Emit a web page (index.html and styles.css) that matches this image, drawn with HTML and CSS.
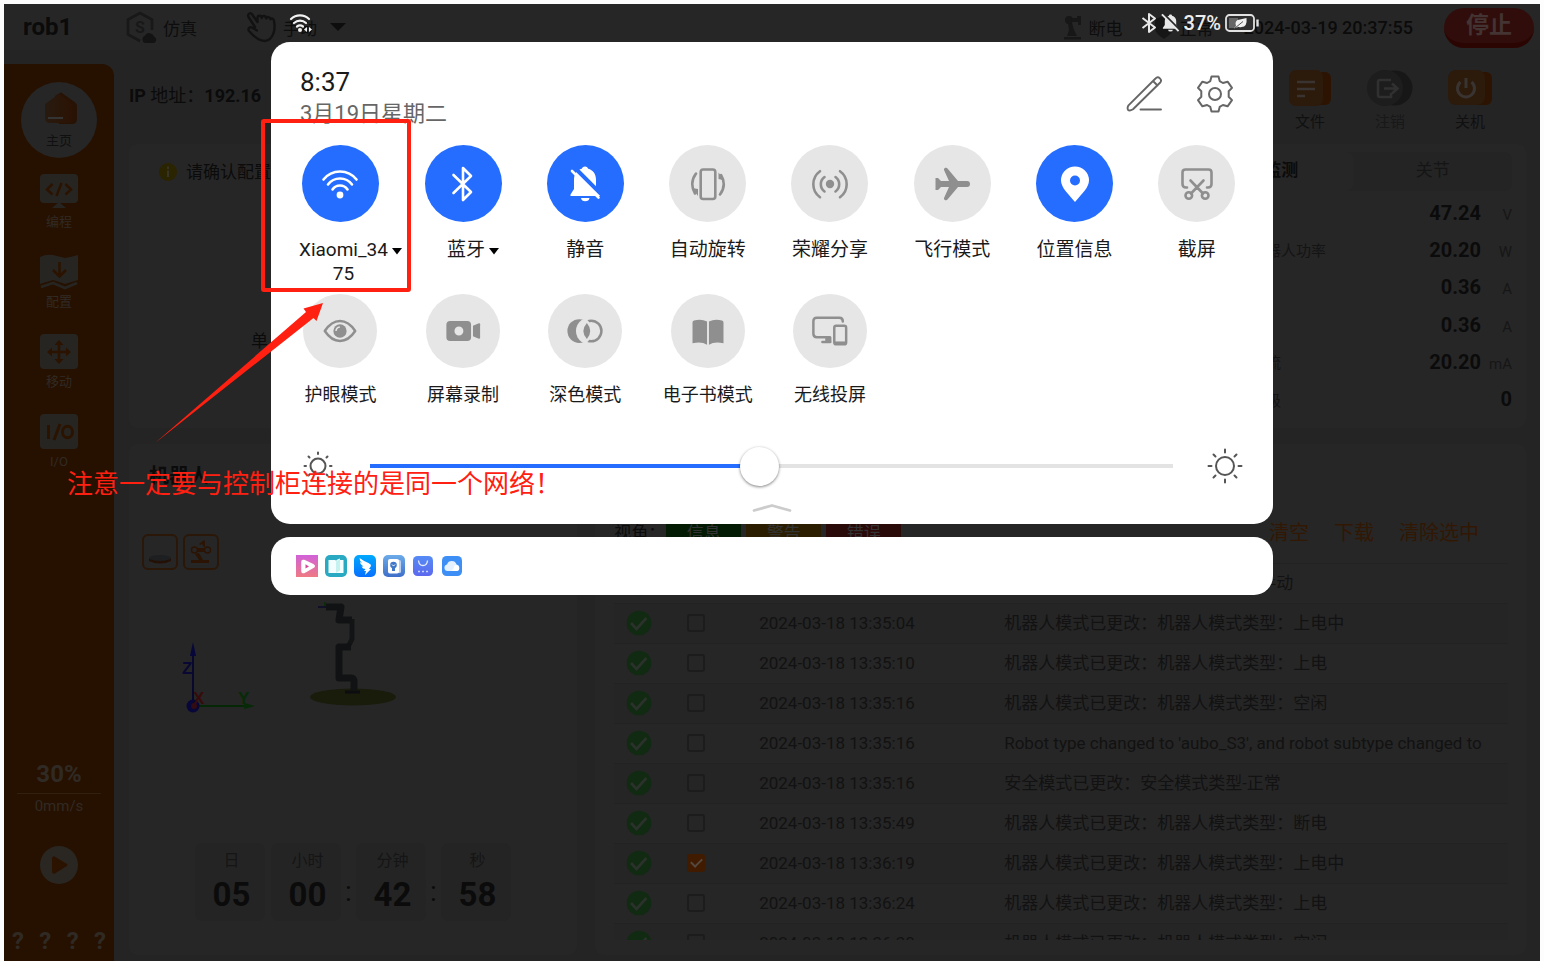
FILE: index.html
```html
<!DOCTYPE html>
<html lang="zh-CN">
<head>
<meta charset="utf-8">
<title>rob1</title>
<link rel="stylesheet" href="styles.css">
</head>
<body>
<svg class="defs" aria-hidden="true">
  <symbol id="ok" viewBox="0 0 26 26"><circle cx="13" cy="13" r="12.3" fill="#112a12"/><path d="M5 13l5.500 6L20.500 8" fill="none" stroke="#2b312b" stroke-width="2.800"/></symbol>
</svg>
<div class="screen">
  <header class="topbar">
    <strong class="robot-name">rob1</strong>
    <span class="mode sim">
      <svg width="32" height="34" viewBox="0 0 32 34"><path d="M15 31L3 24.500V9.500L15 3l12 6.500V20" fill="none" stroke="#181818" stroke-width="2.600"/><text x="15" y="23" class="hex-letter" text-anchor="middle">S</text><path d="M20 33a4 4 0 0 1 0-7.500 5 5 0 0 1 9 1 3.500 3.500 0 0 1 0 6.500z" fill="#131313"/></svg>
      仿真
    </span>
    <button class="mode hand" type="button">
      <svg width="32" height="34" viewBox="0 0 32 34"><path d="M10 17L3.500 7C2 4 5.500 2 7.200 4.500L12.500 12V8c0-3 4-3 4.200 0 .5-3 4.300-2.500 4.500.5 1-2.500 4-1.500 4.300.8 1-1.500 3-.8 3.400 1.200C31 20 28 30 20 31c-5 0-9-2-16-10-1.500-2.500 1-4.500 3-3.500l5 3" fill="none" stroke="#121212" stroke-width="2.400" stroke-linejoin="round" stroke-linecap="round"/></svg>
      手动
      <svg class="caret" width="16" height="10" viewBox="0 0 16 10"><path d="M0 1h16L8 9z" fill="#0d0d0d"/></svg>
    </button>
    <span class="mode power">
      <svg width="20" height="26" viewBox="0 0 20 26"><g fill="#171717"><path d="M1 23h17v2.500H1zM4 22l2-6-1-7h4l2 7 3 6z"/><circle cx="6" cy="6" r="4"/><path d="M8 4h6V2h4v9h-3V8H9z"/></g></svg>
      断电
    </span>
    <span class="mode safety">
      <svg width="20" height="26" viewBox="0 0 20 26"><path d="M10 2l9 3v9c0 5-5 8-9 11-4-3-9-6-9-11V5z" fill="#161616"/></svg>
      正常
    </span>
    <time class="clock">2024-03-19 20:37:55</time>
    <button class="stop" type="button">停止</button>
  </header>

  <nav class="sidebar">
    <a class="nav-item active" href="#">
      <svg width="40" height="36" viewBox="0 0 40 36"><defs><linearGradient id="hg" x1="0" x2="1"><stop offset="0" stop-color="#281a10"/><stop offset="1" stop-color="#2b1303"/></linearGradient></defs><path d="M16 5l6-3.500 13 9c2 1.500 3 3 3 5V28q0 5-5 5H20z" fill="#281204"/><path d="M6 13L20 3l13 10v19H11q-5 0-5-5z" fill="url(#hg)"/><path d="M9 27h15" stroke="#343434" stroke-width="2"/></svg>
      主页
    </a>
    <a class="nav-item" href="#">
      <svg width="38" height="36" viewBox="0 0 38 36"><rect width="38" height="29" rx="4" fill="#272522"/><path d="M19 28l7 6H12z" fill="#272522"/><path d="M12.500 10l-5.500 5.500 5.500 5M25.500 10l5.500 5.500-5.500 5M21.500 9l-5 13" fill="none" stroke="#2b1300" stroke-width="2.500"/></svg>
      编程
    </a>
    <a class="nav-item" href="#">
      <svg width="38" height="36" viewBox="0 0 38 36"><path d="M0 3q6-3 13-2l12 3q6-1 13-3v25l-13 4-12-4-13 4z" fill="#272522"/><path d="M1 33l12-4 12 5 12-5" fill="none" stroke="#272522" stroke-width="2.600"/><path d="M19.500 8v14M13 16l6.500 6.500L26 16" fill="none" stroke="#2b1300" stroke-width="2.600"/></svg>
      配置
    </a>
    <a class="nav-item" href="#">
      <svg width="38" height="36" viewBox="0 0 38 36"><rect width="38" height="35" rx="4" fill="#272522"/><path d="M19 9v18M10 18h18" stroke="#2b1300" stroke-width="2.500"/><path d="M19 6l4.500 5h-9zM19 30l4.500-5h-9zM7 18l5-4.500v9zM31 18l-5-4.500v9z" fill="#2b1300"/></svg>
      移动
    </a>
    <a class="nav-item" href="#">
      <svg width="38" height="36" viewBox="0 0 38 36"><rect width="38" height="35" rx="4" fill="#272522"/><path d="M8.500 11v14M20 10l-6 16" stroke="#2b1300" stroke-width="3"/><ellipse cx="27.500" cy="18" rx="5" ry="5.800" fill="none" stroke="#2b1300" stroke-width="3"/></svg>
      I/O
    </a>
    <div class="speed">
      <strong>30%</strong>
      <span>0mm/s</span>
    </div>
    <button class="play" type="button" aria-label="播放"><svg width="38" height="38" viewBox="0 0 38 38"><circle cx="19" cy="19" r="19" fill="#2a2723"/><path d="M14.500 11.500L26 18.500q1 .5 0 1L14.500 26.500q-1.500.5-1.500-1V12.500q0-1.500 1.500-1z" fill="#2b1300" stroke="#2b1300" stroke-width="2"/></svg></button>
    <div class="unknown"><span>?</span><span>?</span><span>?</span><span>?</span></div>
  </nav>

  <main class="content">
    <div class="toolbar">
      <p class="ip"><b>IP</b> 地址：<b>192.16</b></p>
      <div class="tools">
        <button class="tool" type="button"><svg width="44" height="38" viewBox="0 0 44 38"><rect x="14" y="3" width="29" height="33" rx="6" fill="#2d1402"/><rect x="1" y="1" width="34" height="36" rx="7" fill="#2c1a0b"/><path d="M9 13h18M9 20h18M9 27h8" stroke="#393431" stroke-width="2.400"/></svg>文件</button>
        <button class="tool off" type="button"><svg width="48" height="38" viewBox="0 0 48 38"><circle cx="29" cy="19" r="17.500" fill="#171717"/><circle cx="19" cy="19" r="18" fill="#1d1d1d"/><path d="M25 11h-11q-2 0-2 2v13q0 2 2 2h11v-4M18 19.500h13M26 14.500l5.500 5-5.500 5" fill="none" stroke="#303030" stroke-width="2.600"/></svg>注销</button>
        <button class="tool" type="button"><svg width="46" height="38" viewBox="0 0 46 38"><rect x="18" y="3" width="27" height="33" rx="6" fill="#2d1402"/><rect x="1" y="1" width="37" height="35" rx="8" fill="#2c1a0b"/><path d="M13.500 13a8.500 8.500 0 1 0 11 0M19 9v10" fill="none" stroke="#393431" stroke-width="3"/></svg>关机</button>
      </div>
    </div>

    <div class="top-row">
      <section class="card notice">
        <p class="hint"><svg width="18" height="18" viewBox="0 0 18 18"><circle cx="9" cy="9" r="9" fill="#2b2400"/><path d="M9 7.500V14M9 3.500V6" stroke="#35332a" stroke-width="2"/></svg>请确认配置</p>
        <p class="unit-note">单</p>
      </section>
      <section class="card monitor">
        <div class="tabs">
          <button class="tab on" type="button">监测</button>
          <button class="tab" type="button">关节</button>
        </div>
        <dl class="readings">
          <div><dt></dt><dd><b>47.24</b><i>V</i></dd></div>
          <div><dt>机器人功率</dt><dd><b>20.20</b><i>W</i></dd></div>
          <div><dt></dt><dd><b>0.36</b><i>A</i></dd></div>
          <div><dt></dt><dd><b>0.36</b><i>A</i></dd></div>
          <div><dt>电流</dt><dd><b>20.20</b><i>mA</i></dd></div>
          <div><dt>等级</dt><dd><b>0</b></dd></div>
        </dl>
      </section>
    </div>

    <div class="bottom-row">
      <section class="card robot">
        <h2>机器人</h2>
        <div class="views">
          <button type="button" aria-label="底座"><svg width="32" height="32" viewBox="0 0 32 32"><path d="M5 22v3q11 5 22 0v-3z" fill="#241005"/><ellipse cx="16" cy="22" rx="11" ry="3" fill="#1d1f20"/></svg></button>
          <button type="button" aria-label="机械臂"><svg width="32" height="32" viewBox="0 0 32 32"><g fill="none" stroke="#2c1404" stroke-width="1.500"><circle cx="9.500" cy="14" r="3"/><circle cx="22.500" cy="14" r="3"/></g><path d="M13 12h6v4h-6zM10 18l4-1 4 7h-4zM6 24h18v3H6zM14 8l5-4 1 1v6h-1l-2-3-2 1z" fill="#2c1404"/></svg></button>
        </div>
        <svg class="scene" viewBox="0 0 280 120" width="280" height="120">
          <path d="M51 48V100" stroke="#08082e" stroke-width="2"/><path d="M51 40l3 14h-6z" fill="#07073a"/>
          <path d="M56 104h54" stroke="#062706" stroke-width="2"/><path d="M102 101l11 3-11 3z" fill="#062b06"/>
          <circle cx="51" cy="104" r="6.500" fill="#07073a"/><circle cx="52" cy="104" r="3" fill="#330b12"/>
          <text x="40" y="72" fill="#080832">Z</text><text x="51" y="102" fill="#370b0b">X</text><text x="96" y="102" fill="#062b06">Y</text>
          <ellipse cx="211" cy="95" rx="43" ry="8.500" fill="#191b0b"/>
          <path d="M184 5h15l-2 13h13" fill="none" stroke="#111213" stroke-width="7" stroke-linejoin="round"/>
          <path d="M210 17v20l-4 8" fill="none" stroke="#131415" stroke-width="5"/>
          <path d="M209 45h-12v31h12q3 0 3 4v8" fill="none" stroke="#111213" stroke-width="7" stroke-linejoin="round"/>
          <path d="M176 5h8" stroke="#101028" stroke-width="2"/><path d="M183 0v4" stroke="#0b2b0b" stroke-width="2"/>
          <path d="M203 90h15" stroke="#0c0d10" stroke-width="3"/>
        </svg>
        <div class="countdown">
          <div class="cell"><span>日</span><b>05</b></div>
          <em></em>
          <div class="cell"><span>小时</span><b>00</b></div>
          <em class="colon">:</em>
          <div class="cell"><span>分钟</span><b>42</b></div>
          <em class="colon">:</em>
          <div class="cell"><span>秒</span><b>58</b></div>
        </div>
      </section>

      <section class="card log">
        <div class="filters">
          <span class="filters-label">视角：</span>
          <button class="chip info" type="button">信息</button>
          <button class="chip warn" type="button">警告</button>
          <button class="chip error" type="button">错误</button>
          <div class="actions"><a href="#">清空</a><a href="#">下载</a><a href="#">清除选中</a></div>
        </div>
        <div class="log-scroll">
          <table>
            <colgroup><col class="c-state"><col class="c-pick"><col class="c-time"><col></colgroup>
            <tbody>
              <tr><td><svg><use href="#ok"/></svg></td><td><input type="checkbox" aria-label="选择"></td><td></td><td>机器人模式已更改：机器人模式：手动</td></tr>
              <tr><td><svg><use href="#ok"/></svg></td><td><input type="checkbox" aria-label="选择"></td><td>2024-03-18 13:35:04</td><td>机器人模式已更改：机器人模式类型：上电中</td></tr>
              <tr><td><svg><use href="#ok"/></svg></td><td><input type="checkbox" aria-label="选择"></td><td>2024-03-18 13:35:10</td><td>机器人模式已更改：机器人模式类型：上电</td></tr>
              <tr><td><svg><use href="#ok"/></svg></td><td><input type="checkbox" aria-label="选择"></td><td>2024-03-18 13:35:16</td><td>机器人模式已更改：机器人模式类型：空闲</td></tr>
              <tr><td><svg><use href="#ok"/></svg></td><td><input type="checkbox" aria-label="选择"></td><td>2024-03-18 13:35:16</td><td>Robot type changed to 'aubo_S3', and robot subtype changed to</td></tr>
              <tr><td><svg><use href="#ok"/></svg></td><td><input type="checkbox" aria-label="选择"></td><td>2024-03-18 13:35:16</td><td>安全模式已更改：安全模式类型-正常</td></tr>
              <tr><td><svg><use href="#ok"/></svg></td><td><input type="checkbox" aria-label="选择"></td><td>2024-03-18 13:35:49</td><td>机器人模式已更改：机器人模式类型：断电</td></tr>
              <tr><td><svg><use href="#ok"/></svg></td><td><input type="checkbox" aria-label="选择" checked></td><td>2024-03-18 13:36:19</td><td>机器人模式已更改：机器人模式类型：上电中</td></tr>
              <tr><td><svg><use href="#ok"/></svg></td><td><input type="checkbox" aria-label="选择"></td><td>2024-03-18 13:36:24</td><td>机器人模式已更改：机器人模式类型：上电</td></tr>
              <tr><td><svg><use href="#ok"/></svg></td><td><input type="checkbox" aria-label="选择"></td><td>2024-03-18 13:36:30</td><td>机器人模式已更改：机器人模式类型：空闲</td></tr>
            </tbody>
          </table>
        </div>
      </section>
    </div>
  </main>

  <div class="shade">
    <div class="status-bar">
      <svg width="26" height="22" viewBox="0 0 26 22"><g fill="none" stroke="#f2f2f2" stroke-width="2.200" stroke-linecap="round"><path d="M2 7a13 13 0 0 1 18 0M5 11a9 9 0 0 1 12 0M8 14.500a5 5 0 0 1 6 0"/></g><circle cx="11" cy="18" r="2" fill="#f2f2f2"/><path d="M18 15v5l-3-2.500zM20 15v5l3-2.500z" fill="#f2f2f2"/></svg>
      <div class="status-right">
        <svg width="16" height="22" viewBox="0 0 16 22"><path d="M1.500 6L14 15.500 8 20V2l6 4.500L1.500 16" fill="none" stroke="#e8e8e8" stroke-width="2" stroke-linejoin="round"/></svg>
        <svg width="19" height="20" viewBox="0 0 40 40"><path d="M20 2c2 0 3 1 3.300 2.500C29 6 32 10 32 15.500V24l4 6v2H4v-2l4-6v-8.500C8 10 11 6 16.700 4.500 17 3 18 2 20 2zM15 34h10a5 4 0 0 1-10 0z" fill="#e8e8e8"/><path d="M6 1l34 34" stroke="#262626" stroke-width="4"/><path d="M2 2l35 35" stroke="#e8e8e8" stroke-width="4"/></svg>
        <span>37%</span>
        <svg width="34" height="20" viewBox="0 0 34 20"><rect x="1" y="2" width="28" height="16" rx="3.500" fill="#303030" stroke="#e2e2e2" stroke-width="1.800"/><rect x="4" y="5" width="9" height="10" fill="#666"/><path d="M32.500 6.500v7" stroke="#e2e2e2" stroke-width="2.400"/><path d="M9 15.500L11 13Q9 7 15 6.500L21.500 5Q22.500 14 16.500 14q-2 .5-4-.3z" fill="#f0f0f0"/><path d="M10 15l8-6.500" stroke="#555" stroke-width="1"/></svg>
      </div>
    </div>

    <section class="panel">
      <div class="panel-head">
        <div>
          <div class="now">8:37</div>
          <div class="date">3月19日星期二</div>
        </div>
        <div class="panel-tools">
          <button type="button" aria-label="编辑"><svg width="38" height="38" viewBox="0 0 38 38"><g fill="none" stroke="#666" stroke-width="1.900" stroke-linecap="round" stroke-linejoin="round"><path d="M29.500 3.500a2.800 2.800 0 0 1 4.500 4.300L7 34.300q-3.500 2-5 .5-1-2 .5-4.500zM27 6l4.500 4.500M14.500 34.500H35"/></g></svg></button>
          <button type="button" aria-label="设置"><svg width="38" height="38" viewBox="0 0 38 38"><g fill="none" stroke="#666" stroke-width="2" stroke-linejoin="round"><path d="M15.500 1.500h7l1.200 4.600 3.200 1.900 4.700-1.300 4.400 6.200-3.300 3.300v5.600l3.300 3.300-4.400 6.200-4.700-1.300-3.200 1.900-1.200 4.600h-7l-1.200-4.600-3.200-1.900-4.700 1.300-4.400-6.200 3.300-3.300v-5.600l-3.300-3.300 4.400-6.200L11.100 8l3.200-1.900z"/><circle cx="19" cy="19" r="6"/></g></svg></button>
        </div>
      </div>

      <div class="tiles">
        <button class="tile on" type="button">
          <span class="disc"><svg viewBox="0 0 40 40"><g class="line"><path d="M3.500 15.500a21 21 0 0 1 33 0M8 20.500a15 15 0 0 1 24 0M12.500 25.500a9 9 0 0 1 15 0"/></g><circle cx="20" cy="31" r="3.400"/></svg></span>
          <span class="name with-caret"><span>Xiaomi_34<br>75</span><svg class="drop" viewBox="0 0 10 8"><path d="M0 1h10L5 7.500z"/></svg></span>
        </button>
        <button class="tile on" type="button">
          <span class="disc"><svg viewBox="0 0 40 40"><path class="line" d="M10.500 11L28 28l-8 8V4l8 8L10.500 29"/></svg></span>
          <span class="name with-caret"><span>蓝牙</span><svg class="drop" viewBox="0 0 10 8"><path d="M0 1h10L5 7.500z"/></svg></span>
        </button>
        <button class="tile on" type="button">
          <span class="disc"><svg viewBox="0 0 40 40"><path d="M20 2.500c1.700 0 2.900 1 3.200 2.300C28 6 31 10 31 15.500V24l4.500 6.500V32H5.500v-1.500L9 25V15.500C9 10 12 6 16.800 4.800 17.100 3.500 18.300 2.500 20 2.500zM16 34h8.500a4.300 3.800 0 0 1-8.500 0z"/><path d="M8 2l32 32v-8" fill="none" stroke="#256dff" stroke-width="4"/><path class="line" d="M7 7l26.500 26.500"/></svg></span>
          <span class="name">静音</span>
        </button>
        <button class="tile" type="button">
          <span class="disc"><svg viewBox="0 0 40 40"><rect class="line" x="12.700" y="5.500" width="14.600" height="29.500" rx="2.500"/><path class="line" d="M8 9.500Q1 19 7 29.500M32 30.500Q39 21 33 11"/><path d="M4 24l6 1v7zM30.500 8.500l6 8-6-1.500z"/></svg></span>
          <span class="name">自动旋转</span>
        </button>
        <button class="tile" type="button">
          <span class="disc"><svg viewBox="0 0 40 40"><circle cx="20" cy="20" r="4.200"/><path class="line" d="M10 7.200a16 16 0 0 0 0 26M14.500 13a9 9 0 0 0 0 14.500M30 7.200a16 16 0 0 1 0 26M25.500 13a9 9 0 0 1 0 14.500"/></svg></span>
          <span class="name">荣耀分享</span>
        </button>
        <button class="tile" type="button">
          <span class="disc"><svg viewBox="0 0 40 40"><path d="M35 17a3 3 0 0 1 0 6H26L15.500 35.500a2 2 0 0 1-3.600-1.200L17 23H9l-3 3H3.500V14H6l3 3h8L11.900 5.700a2 2 0 0 1 3.600-1.200L26 17z"/></svg></span>
          <span class="name">飞行模式</span>
        </button>
        <button class="tile on" type="button">
          <span class="disc"><svg viewBox="0 0 40 40"><path fill-rule="evenodd" d="M20 38C13 29.500 6 23.500 6 16.500a14 14 0 0 1 28 0C34 23.500 27 29.500 20 38zM20 11.500a5 5 0 1 0 0 10 5 5 0 0 0 0-10z"/></svg></span>
          <span class="name">位置信息</span>
        </button>
        <button class="tile" type="button">
          <span class="disc"><svg viewBox="0 0 40 40"><path class="line" d="M10 23.500H9q-3.500 0-3.500-3.500V8.500q0-3 3-3h23q3 0 3 3V20q0 3.500-3.500 3.500h-1M13.500 16.500L26 29.500M26.500 16.500L14 29.500"/><circle class="line" cx="11.800" cy="31.500" r="3.300"/><circle class="line" cx="28.200" cy="31.500" r="3.300"/></svg></span>
          <span class="name">截屏</span>
        </button>
        <button class="tile small" type="button">
          <span class="disc"><svg viewBox="0 0 40 40"><path class="line" d="M4 20Q11 9.500 20 9.500T36 20Q29 30.500 20 30.500T4 20z"/><circle cx="20" cy="20" r="7"/><path d="M15.800 20a4.500 4.500 0 0 1 4-4.200" fill="none" stroke="#e6e6e6" stroke-width="1.600"/></svg></span>
          <span class="name">护眼模式</span>
        </button>
        <button class="tile small" type="button">
          <span class="disc"><svg viewBox="0 0 40 40"><path fill-rule="evenodd" d="M6.500 9.500h18q4 0 4 4v13q0 4-4 4h-18q-4 0-4-4v-13q0-4 4-4zM15.700 15.300a4.700 4.700 0 1 0 0 9.400 4.700 4.700 0 0 0 0-9.400z"/><path d="M30.500 14.500L36 12q2-.6 2 1v14q0 1.600-2 1l-5.500-2.500z"/></svg></span>
          <span class="name">屏幕录制</span>
        </button>
        <button class="tile small" type="button">
          <span class="disc"><svg viewBox="0 0 40 40"><circle cx="14" cy="20" r="12.500"/><circle cx="26.500" cy="20" r="12.800" fill="#e6e6e6"/><circle class="line" cx="26.500" cy="20" r="10.800"/><path d="M20.500 6.500a17 17 0 0 1 0 27l-4-2a14 14 0 0 1 0-23z" fill="#e6e6e6"/><path d="M22 11.500q7 8.500 0 17-7.500-8.500 0-17z"/></svg></span>
          <span class="name">深色模式</span>
        </button>
        <button class="tile small" type="button">
          <span class="disc"><svg viewBox="0 0 40 40"><path d="M19 10v24.500q-6-4-15.300-1.500V11q0-1.500 1.500-2Q13 7 19 10zM21 10v24.500q6-4 15.300-1.500V11q0-1.500-1.500-2Q27 7 21 10z"/></svg></span>
          <span class="name">电子书模式</span>
        </button>
        <button class="tile small" type="button">
          <span class="disc"><svg viewBox="0 0 40 40"><path class="line" d="M20 26.500H6q-3.500 0-3.500-3.500V9.500Q2.500 6 6 6h24q3.500 0 3.500 4M12 31.500h8"/><path d="M15 26.500h6.500v6H15z"/><rect class="line" x="24.500" y="14.500" width="12.500" height="19.500" rx="2"/><path d="M25 31h12v3.500H25z"/></svg></span>
          <span class="name">无线投屏</span>
        </button>
      </div>

      <div class="brightness">
        <svg width="32" height="32" viewBox="0 0 32 32"><g class="sun"><circle cx="16" cy="16" r="7.500"/><path d="M16 2.500v1.500M16 28v1.500M2.500 16H4M28 16h1.500M6.500 6.500l1 1M24.500 24.500l1 1M6.500 25.500l1-1M24.500 7.500l1-1"/></g></svg>
        <input type="range" min="0" max="1000" value="484" aria-label="亮度">
        <svg width="36" height="36" viewBox="0 0 36 36"><g class="sun"><circle cx="18" cy="18" r="9"/><path d="M18 1.500v3M18 31.500v3M1.500 18h3M31.500 18h3M6.500 6.500l2 2M27.500 27.500l2 2M6.500 29.500l2-2M27.500 8.500l2-2"/></g></svg>
      </div>
      <svg class="grip" width="40" height="10" viewBox="0 0 40 10"><path d="M2 7.500L20 2.500 38 7.500" fill="none" stroke="#ccc" stroke-width="2.800" stroke-linecap="round" stroke-linejoin="round"/></svg>
    </section>

    <section class="notifications">
      <svg viewBox="0 0 22 22"><defs><linearGradient id="a1" x2="0" y2="1"><stop stop-color="#d161d9"/><stop offset="1" stop-color="#ee7a83"/></linearGradient></defs><path d="M0 0h22v22H0z" fill="url(#a1)"/><path d="M8 5.500L17.500 10q1.500 1 0 2.200L8 17.500q-2 .5-2-1.500V7q0-2 2-1.500z" fill="#fff" stroke="#fff" stroke-width="1.500"/><path d="M9.500 9.300v4.200l3.500-2.100z" fill="#d4489b"/></svg>
      <svg viewBox="0 0 22 22"><rect width="22" height="22" rx="5" fill="#2aa9c2"/><path d="M3.500 5H10q1 0 1 1 0-1 1.500-1.500l2.500-1V5h3.500v13H3.500z" fill="#f3ffff"/><path d="M11 6.500L15 4v11.500L11 18z" fill="#c5f2ee"/></svg>
      <svg viewBox="0 0 22 22"><defs><linearGradient id="a3" x2="0" y2="1"><stop stop-color="#00a9ff"/><stop offset="1" stop-color="#0870ff"/></linearGradient></defs><rect width="22" height="22" rx="5" fill="url(#a3)"/><path d="M5.500 3q4 3 9 5 3 1.500 2.500 3L15 14h2l-6 6 1-4h-2l1.500-2q-3 0-4-2.500h2Q6 9 6 7l2 1Q5.500 5.500 5.500 3z" fill="#fff"/></svg>
      <svg viewBox="0 0 22 22"><defs><linearGradient id="a4" x2="0" y2="1"><stop stop-color="#6cabe9"/><stop offset="1" stop-color="#3e6fc9"/></linearGradient></defs><rect width="22" height="22" rx="5" fill="url(#a4)"/><rect x="14" y="5" width="4" height="13" rx="1.500" fill="#b7d1f4"/><rect x="5" y="4" width="11" height="14.500" rx="2" fill="#fff"/><circle cx="10.500" cy="10" r="3.300" fill="#3f78c9"/><path d="M9 13h3v3H9z" fill="#3f78c9"/><path d="M9 9.500l1.500 1.500L12 9.500" fill="none" stroke="#fff"/></svg>
      <svg viewBox="0 0 22 22"><defs><linearGradient id="a5" x2="0" y2="1"><stop stop-color="#558bf5"/><stop offset="1" stop-color="#5d69ee"/></linearGradient></defs><rect x="1" y="1" width="20" height="20" rx="4.500" fill="url(#a5)"/><path d="M6.500 5.500q.5 5 4.500 5t4.500-5" fill="none" stroke="#e5ebff" stroke-width="1.300"/><path d="M6 16.500h2M10 16.500h2M14 16.500h2" stroke="#c9d3ff" stroke-width="1.500"/></svg>
      <svg viewBox="0 0 22 22"><rect x="1" y="1" width="20" height="20" rx="4.500" fill="#3e8ff5"/><path d="M6.500 16a3.300 3.300 0 0 1-.5-6.500 5 5 0 0 1 9.500 0 3.300 3.300 0 0 1 0 6.500z" fill="#e5f1ff"/><path d="M8 16q5 0 5-5 3-2.500 5 1 1 4-2.500 4z" fill="#fff"/></svg>
    </section>
  </div>

  <div class="mark-box"></div>
  <svg class="mark-arrow" width="170" height="144" viewBox="0 0 170 144"><path d="M0 142L151 11 148.500 7.500 168 2 161.500 20 158.500 17z" fill="#ff2011"/></svg>
  <p class="mark-text">注意一定要与控制柜连接的是同一个网络！</p>
</div>
</body>
</html>
```
FILE: styles.css
```css
* { box-sizing: border-box; }

body {
  margin: 0;
  background: #fdfdfd;
  font-family: Roboto, "Noto Sans CJK SC", sans-serif;
  font-size: 17px;
  color: #0b0b0b;
}

button {
  font: inherit;
  color: inherit;
  background: none;
  border: 0;
  padding: 0;
}

a { color: inherit; text-decoration: none; }
p, h2, dl, dd { margin: 0; }
.defs { position: absolute; width: 0; height: 0; }

.screen {
  position: relative;
  display: grid;
  grid-template: 46px minmax(0, 1fr) / 110px minmax(0, 1fr);
  height: calc(100vh - 4px);
  margin: 4px 4px 0;
  overflow: hidden;
  background: #242424;
}

/* Top bar */
.topbar {
  grid-column: 1 / -1;
  display: flex;
  align-items: center;
  padding: 0 6px 0 19px;
  background: #262626;
}
.robot-name { width: 102px; font-size: 24px; }
.mode { display: flex; align-items: center; gap: 6px; white-space: nowrap; color: #0d0d0d; }
.sim { width: 120px; }
.hex-letter { font: 700 16px Roboto, sans-serif; fill: #181818; }
.caret { margin-left: 7px; }
.power { margin-left: auto; }
.safety { margin-left: 31px; }
.clock { margin: 0 31px 0 30px; font-size: 18px; font-weight: 500; }
.stop {
  width: 90px;
  height: 40px;
  margin-top: 2px;
  border-radius: 20px;
  background: #300d0b;
  border-bottom: 5px solid #2b0502;
  color: #433332;
  font-size: 23px;
  font-weight: 700;
  line-height: 34px;
}

/* Sidebar */
.sidebar {
  display: flex;
  flex-direction: column;
  align-items: center;
  margin-top: 14px;
  padding-top: 18px;
  border-radius: 0 12px 0 0;
  background: #261100;
  color: #302a25;
}
.nav-item {
  display: flex;
  flex-direction: column;
  align-items: center;
  gap: 3px;
  height: 80px;
  padding-top: 12px;
  font-size: 13px;
  line-height: 18px;
}
.nav-item.active {
  width: 76px;
  height: 76px;
  margin-bottom: 4px;
  padding-top: 9px;
  gap: 5px;
  border-radius: 50%;
  background: #262626;
  color: #101010;
}
.speed { width: 84px; margin-top: auto; text-align: center; }
.speed strong { display: block; padding-bottom: 5px; border-bottom: 1px solid #33210f; font-size: 24px; line-height: 28px; }
.speed span { font-size: 15px; line-height: 24px; }
.play { height: 38px; margin: 28px 0 43px; }
.unknown { display: flex; justify-content: space-between; width: 94px; margin-bottom: 6px; font-size: 24px; font-weight: 700; line-height: 28px; }

/* Main area */
.content {
  display: grid;
  grid-template-rows: 94px 284px minmax(0, 1fr);
  padding: 0 14px 6px 15px;
}
.toolbar { display: flex; justify-content: space-between; align-items: flex-start; padding: 19px 16px 0 0; }
.ip { padding-top: 14px; font-size: 18px; line-height: 26px; }
.tools { display: flex; }
.tool { display: flex; flex-direction: column; align-items: center; gap: 4px; width: 80px; font-size: 15px; line-height: 22px; color: #101010; }
.tool.off { color: #181818; }

.card { border-radius: 8px; background: #262626; }
.top-row { display: grid; grid-template-columns: minmax(0, 1fr) 345px; gap: 16px; }
.notice { padding: 16px 30px; }
.hint { display: flex; align-items: center; gap: 9px; line-height: 24px; }
.unit-note { margin: 145px 0 0 92px; line-height: 24px; }
.monitor { padding: 8px 14px 10px; }
.tabs { display: grid; grid-template-columns: 1fr 1fr; border-radius: 8px; background: #242424; }
.tab { height: 39px; padding-bottom: 6px; color: #151515; }
.tab.on { padding-left: 14px; border-radius: 8px; background: #262626; color: #0b0b0b; font-weight: 700; }
.readings { display: grid; grid-template-rows: repeat(6, 1fr); height: 224px; margin-top: 3px; }
.readings div { display: flex; align-items: center; justify-content: space-between; padding-left: 56px; }
.readings dt { font-size: 15px; color: #141414; }
.readings dd { display: flex; align-items: baseline; }
.readings b { font-size: 20px; }
.readings i { width: 31px; text-align: right; font-size: 15px; font-style: normal; color: #161616; }

.bottom-row { display: grid; grid-template-columns: 13fr 27fr; gap: 18px; margin-top: 16px; min-height: 0; }
.robot { display: flex; flex-direction: column; padding: 18px 13px 34px; }
.robot h2 { padding-left: 7px; font-size: 20px; line-height: 28px; }
.views { display: flex; gap: 5px; margin-top: 44px; }
.views button { display: grid; place-items: center; width: 36px; height: 36px; border: 2px solid #2b1707; border-radius: 6px; }
.scene { margin-top: 32px; font: 700 17px "Liberation Sans", sans-serif; }
.countdown { display: flex; margin: auto auto 0 53px; }
.cell { display: flex; flex-direction: column; align-items: center; width: 70px; height: 78px; padding: 7px 0 0 3px; border-radius: 8px; background: #242424; }
.cell span { font-size: 16px; line-height: 22px; color: #151515; }
.cell b { font-size: 33px; line-height: 46px; }
.countdown em { width: 6px; font-style: normal; }
.countdown .colon { width: 15px; padding-top: 31px; font-size: 28px; line-height: 36px; text-align: center; }

/* Log */
.log { display: flex; flex-direction: column; min-height: 0; padding: 67px 18px 15px 19px; }
.filters { display: flex; align-items: center; gap: 5px; height: 40px; margin-bottom: 12px; }
.filters-label { width: 47px; white-space: nowrap; }
.chip { width: 75px; height: 40px; color: #333; }
.info { background: #031b03; }
.warn { background: #2b1e00; }
.error { background: #2a0909; }
.actions { display: flex; gap: 25px; margin-left: auto; padding-right: 29px; font-size: 20px; color: #321703; }
.log-scroll { flex: 1; min-height: 0; overflow: hidden; }
table { width: 100%; table-layout: fixed; border-collapse: collapse; }
.c-state { width: 50px; }
.c-pick { width: 64px; }
.c-time { width: 245px; }
tr { height: 40px; }
tr:nth-child(even) { background: #252525; }
td { padding: 0 0 1px 31px; border-top: 1px solid #222; color: #121212; white-space: nowrap; line-height: 24px; }
td:first-child, td:nth-child(2) { padding: 0 0 2px; text-align: center; }
td svg { display: block; width: 26px; height: 26px; margin: 0 auto; }
td input {
  appearance: none;
  display: block;
  width: 18px;
  height: 18px;
  margin: 0 auto;
  border: 2px solid #1c1c1c;
  border-radius: 3px;
}
td input:checked { display: grid; place-items: center; border-color: #401b00; background: #401b00; }
td input:checked::after {
  content: "";
  width: 9px;
  height: 5px;
  margin-bottom: 3px;
  border: solid #55493f;
  border-width: 0 0 2px 2px;
  transform: rotate(-45deg);
}

/* Pulled-down shade */
.shade {
  position: absolute;
  inset: 0;
  display: flex;
  flex-direction: column;
  align-items: center;
}
.status-bar, .panel, .notifications { width: min(1002px, 94%); }
.status-bar { display: flex; align-items: center; justify-content: space-between; height: 38px; padding: 0 14px 0 18px; color: #ededed; }
.status-right { display: flex; align-items: center; gap: 4px; font-size: 20px; font-weight: 500; }
.panel, .notifications { border-radius: 19px; background: #fff; color: #1a1a1a; }
.panel { padding-bottom: 11px; }
.panel-head { display: flex; justify-content: space-between; padding: 24px 39px 0 29px; }
.now { font-size: 26px; line-height: 32px; }
.date { font-size: 22px; line-height: 32px; color: #666; }
.panel-tools { display: flex; gap: 32px; padding-top: 9px; height: 47px; }

.tiles { display: grid; grid-template-columns: repeat(8, 1fr); row-gap: 8px; margin-top: 15px; padding: 0 15px 0 8px; }
.tile { display: flex; flex-direction: column; align-items: center; gap: 16px; font-size: 19px; line-height: 24px; }
.tile.small { gap: 15px; font-size: 18px; }
.disc { display: grid; place-items: center; width: 77px; height: 77px; border-radius: 50%; background: #e6e6e6; fill: #8f8f8f; stroke: none; color: #8f8f8f; }
.on .disc { background: #256dff; fill: #fff; color: #fff; }
.small .disc { width: 74px; height: 74px; }
.disc svg { width: 40px; height: 40px; }
.small .disc svg { width: 38px; height: 38px; }
.line { fill: none; stroke: currentColor; stroke-width: 2.6px; stroke-linecap: round; stroke-linejoin: round; }
.name { white-space: nowrap; }
.with-caret { display: flex; gap: 4px; padding-left: 20px; }
.drop { width: 10px; height: 8px; margin-top: 9px; fill: #000; }

.brightness { display: flex; align-items: center; height: 38px; margin-top: 40px; padding: 0 30px 0 31px; }
.sun { fill: none; stroke: #555; stroke-width: 2px; stroke-linecap: round; }
.brightness input {
  appearance: none;
  flex: 1;
  height: 38px;
  margin: 0 34px 0 36px;
  background: linear-gradient(90deg, #256dff 48%, #e3e3e3 48%) center / 100% 4px no-repeat;
}
.brightness input::-webkit-slider-thumb {
  appearance: none;
  width: 39px;
  height: 39px;
  border-radius: 50%;
  background: #fff;
  box-shadow: 0 1px 3px rgba(0, 0, 0, .5);
}
.grip { display: block; margin: 18px auto 0; }

.notifications { display: flex; align-items: center; gap: 7px; height: 58px; margin-top: 13px; padding: 0 25px; }
.notifications svg { width: 22px; height: 22px; }

/* Annotations drawn over the screen */
.mark-box { position: absolute; left: 257px; top: 115px; width: 150px; height: 173px; border: 4px solid #ff2011; border-radius: 3px; }
.mark-arrow { position: absolute; left: 151px; top: 297px; }
.mark-text { position: absolute; left: 63px; top: 461px; font-size: 26px; line-height: 38px; color: #ff2011; white-space: nowrap; }
```
